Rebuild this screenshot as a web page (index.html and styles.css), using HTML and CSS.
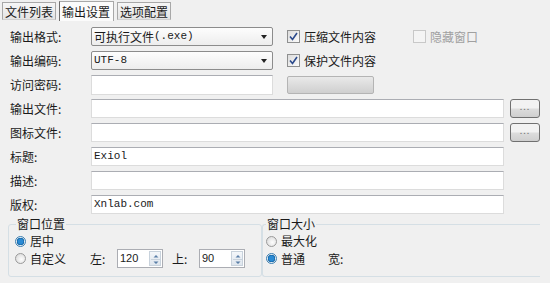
FILE: index.html
```html
<!DOCTYPE html>
<html lang="zh-CN">
<head>
  <meta charset="UTF-8" />
  <title>输出设置</title>
  <link rel="stylesheet" href="styles.css">
</head>
<body>
  <div class="tabs">
    <div class="tab">文件列表</div>
    <div class="tab active">输出设置</div>
    <div class="tab">选项配置</div>
  </div>

  <div class="form">
    <div class="row">
      <span class="label">输出格式:</span>
      <div class="select">可执行文件<span class="mono">(.exe)</span><span class="arrow"></span></div>
      <label class="check checked">压缩文件内容</label>
      <label class="check disabled">隐藏窗口</label>
    </div>
    <div class="row">
      <span class="label">输出编码:</span>
      <div class="select"><span class="mono">UTF-8</span><span class="arrow"></span></div>
      <label class="check checked">保护文件内容</label>
    </div>
    <div class="row">
      <span class="label">访问密码:</span>
      <div class="input short"></div>
      <div class="graybtn"></div>
    </div>
    <div class="row">
      <span class="label">输出文件:</span>
      <div class="input wide"></div>
      <div class="dots">...</div>
    </div>
    <div class="row">
      <span class="label">图标文件:</span>
      <div class="input wide"></div>
      <div class="dots">...</div>
    </div>
    <div class="row">
      <span class="label">标题:</span>
      <div class="input wide mono">Exiol</div>
    </div>
    <div class="row">
      <span class="label">描述:</span>
      <div class="input wide"></div>
    </div>
    <div class="row">
      <span class="label">版权:</span>
      <div class="input wide mono">Xnlab.com</div>
    </div>
  </div>

  <div class="groups">
    <fieldset class="group left">
      <legend>窗口位置</legend>
      <div class="radio checked">居中</div>
      <div class="grow">
        <div class="radio">自定义</div>
        <span class="spin-label">左:</span>
        <div class="spin"><span>120</span><i></i></div>
        <span class="spin-label">上:</span>
        <div class="spin"><span>90</span><i></i></div>
      </div>
    </fieldset>
    <fieldset class="group right">
      <legend>窗口大小</legend>
      <div class="radio">最大化</div>
      <div class="grow">
        <div class="radio checked">普通</div>
        <span class="spin-label wlabel">宽:</span>
      </div>
    </fieldset>
  </div>
</body>
</html>
```

FILE: styles.css
```css
body {
  margin: 0;
  width: 550px;
  height: 283px;
  overflow: hidden;
  background: #f0f0f0;
  color: #1a1a1a;
  font-family: "Noto Sans CJK SC", "Noto Sans", sans-serif;
  font-size: 12px;
  line-height: 1;
}

.mono {
  font-family: "Liberation Mono", "DejaVu Sans Mono", monospace;
  font-size: 11px;
}

/* tabs */
.tabs {
  display: flex;
  align-items: flex-start;
  gap: 3px;
  padding: 1px 0 0 2px;
  height: 27px;
  box-sizing: border-box;
}

.tab {
  margin-top: 1px;
  height: 18px;
  padding: 0 2px;
  line-height: 17px;
  border: 1px solid #a8a8a8;
  border-bottom-color: #d0d0d0;
  background: linear-gradient(#f6f6f6, #e4e4e4);
  box-sizing: border-box;
  font-size: 12px;
}

.tab.active {
  margin-top: 0;
  height: 20px;
  padding: 0 3px 0 2px;
  line-height: 19px;
  background: #fbfbfb;
  border-left-color: #6d6d6d;
  border-bottom: none;
}

/* form rows */
.form {
  display: flex;
  flex-direction: column;
  gap: 5px;
  padding-left: 10px;
}

.row {
  display: flex;
  align-items: center;
  height: 19px;
}

.label {
  width: 81px;
  flex: none;
}

.select {
  position: relative;
  width: 182px;
  height: 19px;
  box-sizing: border-box;
  border: 1px solid #8c8c8c;
  border-radius: 2px;
  background: linear-gradient(#fdfdfd, #ededed);
  padding: 0 2px;
  display: flex;
  align-items: center;
}

.select .arrow {
  position: absolute;
  right: 5px;
  top: 7px;
  border: 3px solid transparent;
  border-top: 4px solid #222;
  border-bottom: none;
}

.input {
  height: 19px;
  box-sizing: border-box;
  background: #fff;
  border: 1px solid #dcdcdc;
  border-top-color: #abadb3;
  padding: 0 2px;
  display: flex;
  align-items: center;
}

.input.short {
  width: 182px;
  height: 20px;
}

.input.wide {
  width: 413px;
}

.graybtn {
  margin-left: 14px;
  width: 87px;
  height: 18px;
  box-sizing: border-box;
  border: 1px solid #b4b4b4;
  border-radius: 2px;
  background: linear-gradient(#e9e9e9, #cfcfcf);
}

.dots {
  margin-left: 6px;
  width: 30px;
  height: 19px;
  box-sizing: border-box;
  border: 1px solid #707070;
  border-radius: 3px;
  background: linear-gradient(#f2f2f2 45%, #dcdcdc 55%, #cfcfcf);
  color: #777;
  font-size: 9px;
  letter-spacing: 1px;
  text-align: center;
  line-height: 14px;
}

/* checkboxes */
.check {
  display: flex;
  align-items: center;
  margin-left: 14px;
  gap: 4px;
}

.check::before {
  content: "";
  width: 11px;
  height: 11px;
  border: 1px solid #8e8f8f;
  background: linear-gradient(135deg, #dcdcdc, #fbfbfb);
}

.check.checked::before {
  background: url("data:image/svg+xml;utf8,<svg xmlns='http://www.w3.org/2000/svg' width='11' height='11'><path d='M2 5.5 L4.5 8.5 L9 2' fill='none' stroke='%232b4a8c' stroke-width='1.6'/></svg>"),
    linear-gradient(135deg, #dcdcdc, #fbfbfb);
}

.check.disabled {
  margin-left: 37px;
  color: #a0a0a0;
}

.check.disabled::before {
  border-color: #c8c8c8;
  background: #f4f4f4;
}

/* group boxes */
.groups {
  display: flex;
  padding: 4px 0 0 8px;
}

.group {
  margin: 0;
  padding: 3px 0 0 6px;
  border: 1px solid #d5dfe5;
  border-radius: 3px;
  height: 59px;
  box-sizing: border-box;
  min-width: 0;
}

.group legend {
  padding: 0 1px;
  margin-left: 1px;
}

.group.left {
  width: 254px;
}

.group.right {
  width: 278px;
  padding-left: 3px;
  border-right: none;
  border-radius: 3px 0 0 3px;
}

.group.right legend {
  margin-left: 0;
}

.radio {
  display: flex;
  align-items: center;
  gap: 4px;
  height: 16px;
}

.radio::before {
  content: "";
  width: 11px;
  height: 11px;
  border-radius: 50%;
  border: 1px solid #9a9a9a;
  background: radial-gradient(circle at 60% 60%, #fdfdfd, #d4d4d4);
  box-sizing: border-box;
  flex: none;
}

.radio.checked::before {
  border-color: #3c7fb1;
  background: radial-gradient(circle, #2a8ad4 0 2.5px, #0d5fa0 3.5px, #dfe8ef 4px);
}

.grow {
  display: flex;
  align-items: center;
  height: 19px;
}

.grow .radio {
  width: 75px;
}

.spin-label {
  width: 27px;
}

.wlabel {
  margin-left: -13px;
}

.spin {
  display: flex;
  align-items: center;
  width: 46px;
  height: 19px;
  box-sizing: border-box;
  background: #fff;
  border: 1px solid #abadb3;
  margin-right: 9px;
  font-family: "Liberation Sans", sans-serif;
  font-size: 11px;
  padding-left: 2px;
}

.spin span {
  flex: 1;
}

.spin i {
  width: 12px;
  height: 15px;
  margin-right: 1px;
  border: 1px solid #c8d2dc;
  background:
    url("data:image/svg+xml;utf8,<svg xmlns='http://www.w3.org/2000/svg' width='12' height='15'><path d='M3.5 5.5 L6 3 L8.5 5.5Z M3.5 9.5 L6 12 L8.5 9.5Z' fill='%235b7fa8'/><path d='M1 7.5 H11' stroke='%23c8d2dc'/></svg>"),
    linear-gradient(#f4f7fa, #dfe6ee);
  box-sizing: border-box;
}
```
